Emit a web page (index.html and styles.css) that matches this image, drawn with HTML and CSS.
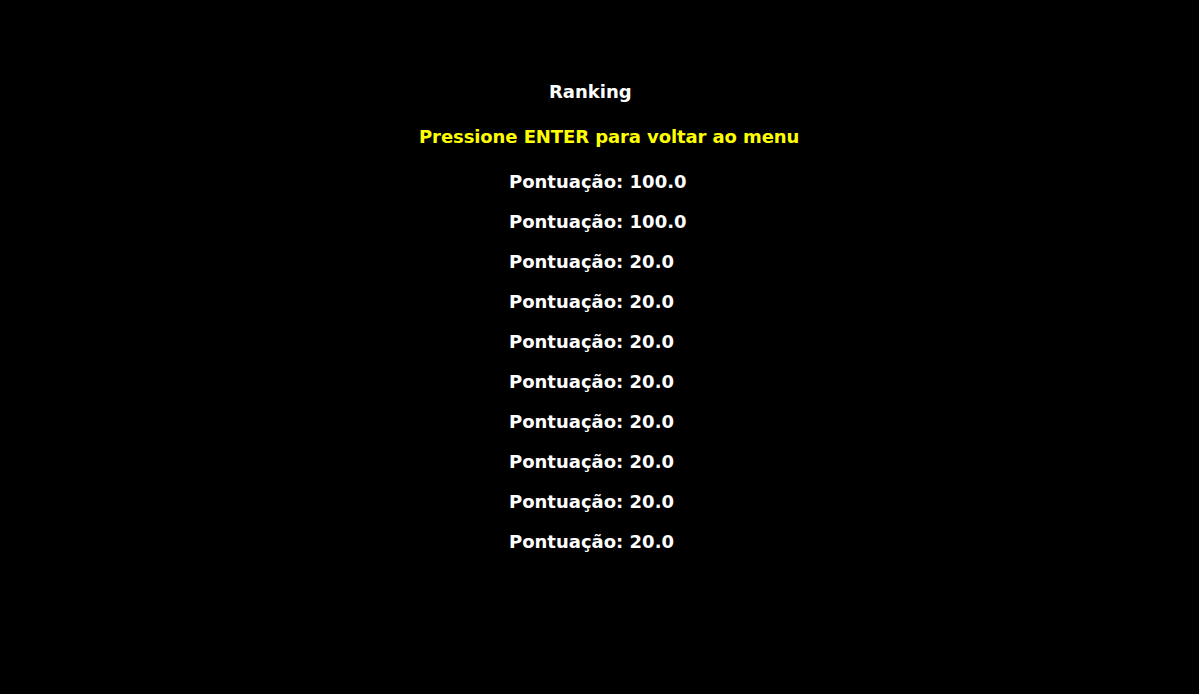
FILE: index.html
```html
<!DOCTYPE html>
<html>
<head>
<meta charset="utf-8">
<link rel="stylesheet" href="styles.css">
</head>
<body>
<main class="screen">
  <h1 class="title">Ranking</h1>
  <p class="hint">Pressione ENTER para voltar ao menu</p>
  <ul class="scores">
    <li>Pontuação: 100.0</li>
    <li>Pontuação: 100.0</li>
    <li>Pontuação: 20.0</li>
    <li>Pontuação: 20.0</li>
    <li>Pontuação: 20.0</li>
    <li>Pontuação: 20.0</li>
    <li>Pontuação: 20.0</li>
    <li>Pontuação: 20.0</li>
    <li>Pontuação: 20.0</li>
    <li>Pontuação: 20.0</li>
  </ul>
</main>
</body>
</html>
```
FILE: styles.css
```css
html, body {
  margin: 0;
  padding: 0;
  background: #000;
  height: 100%;
}
.screen {
  width: 1199px;
  height: 694px;
  background: #000;
  font-family: "DejaVu Sans", sans-serif;
  font-weight: bold;
  font-size: 18px;
  line-height: 20px;
  color: #fff;
  padding-top: 82px;
  box-sizing: border-box;
}
.title {
  margin: 0 0 0 549px;
  font-size: 18px;
  line-height: 20px;
}
.hint {
  margin: 25px 0 0 419px;
  color: #ffff00;
  letter-spacing: -0.09px;
}
.scores {
  list-style: none;
  margin: 25px 0 0 509px;
  padding: 0;
  display: flex;
  flex-direction: column;
  gap: 20px;
}
```
